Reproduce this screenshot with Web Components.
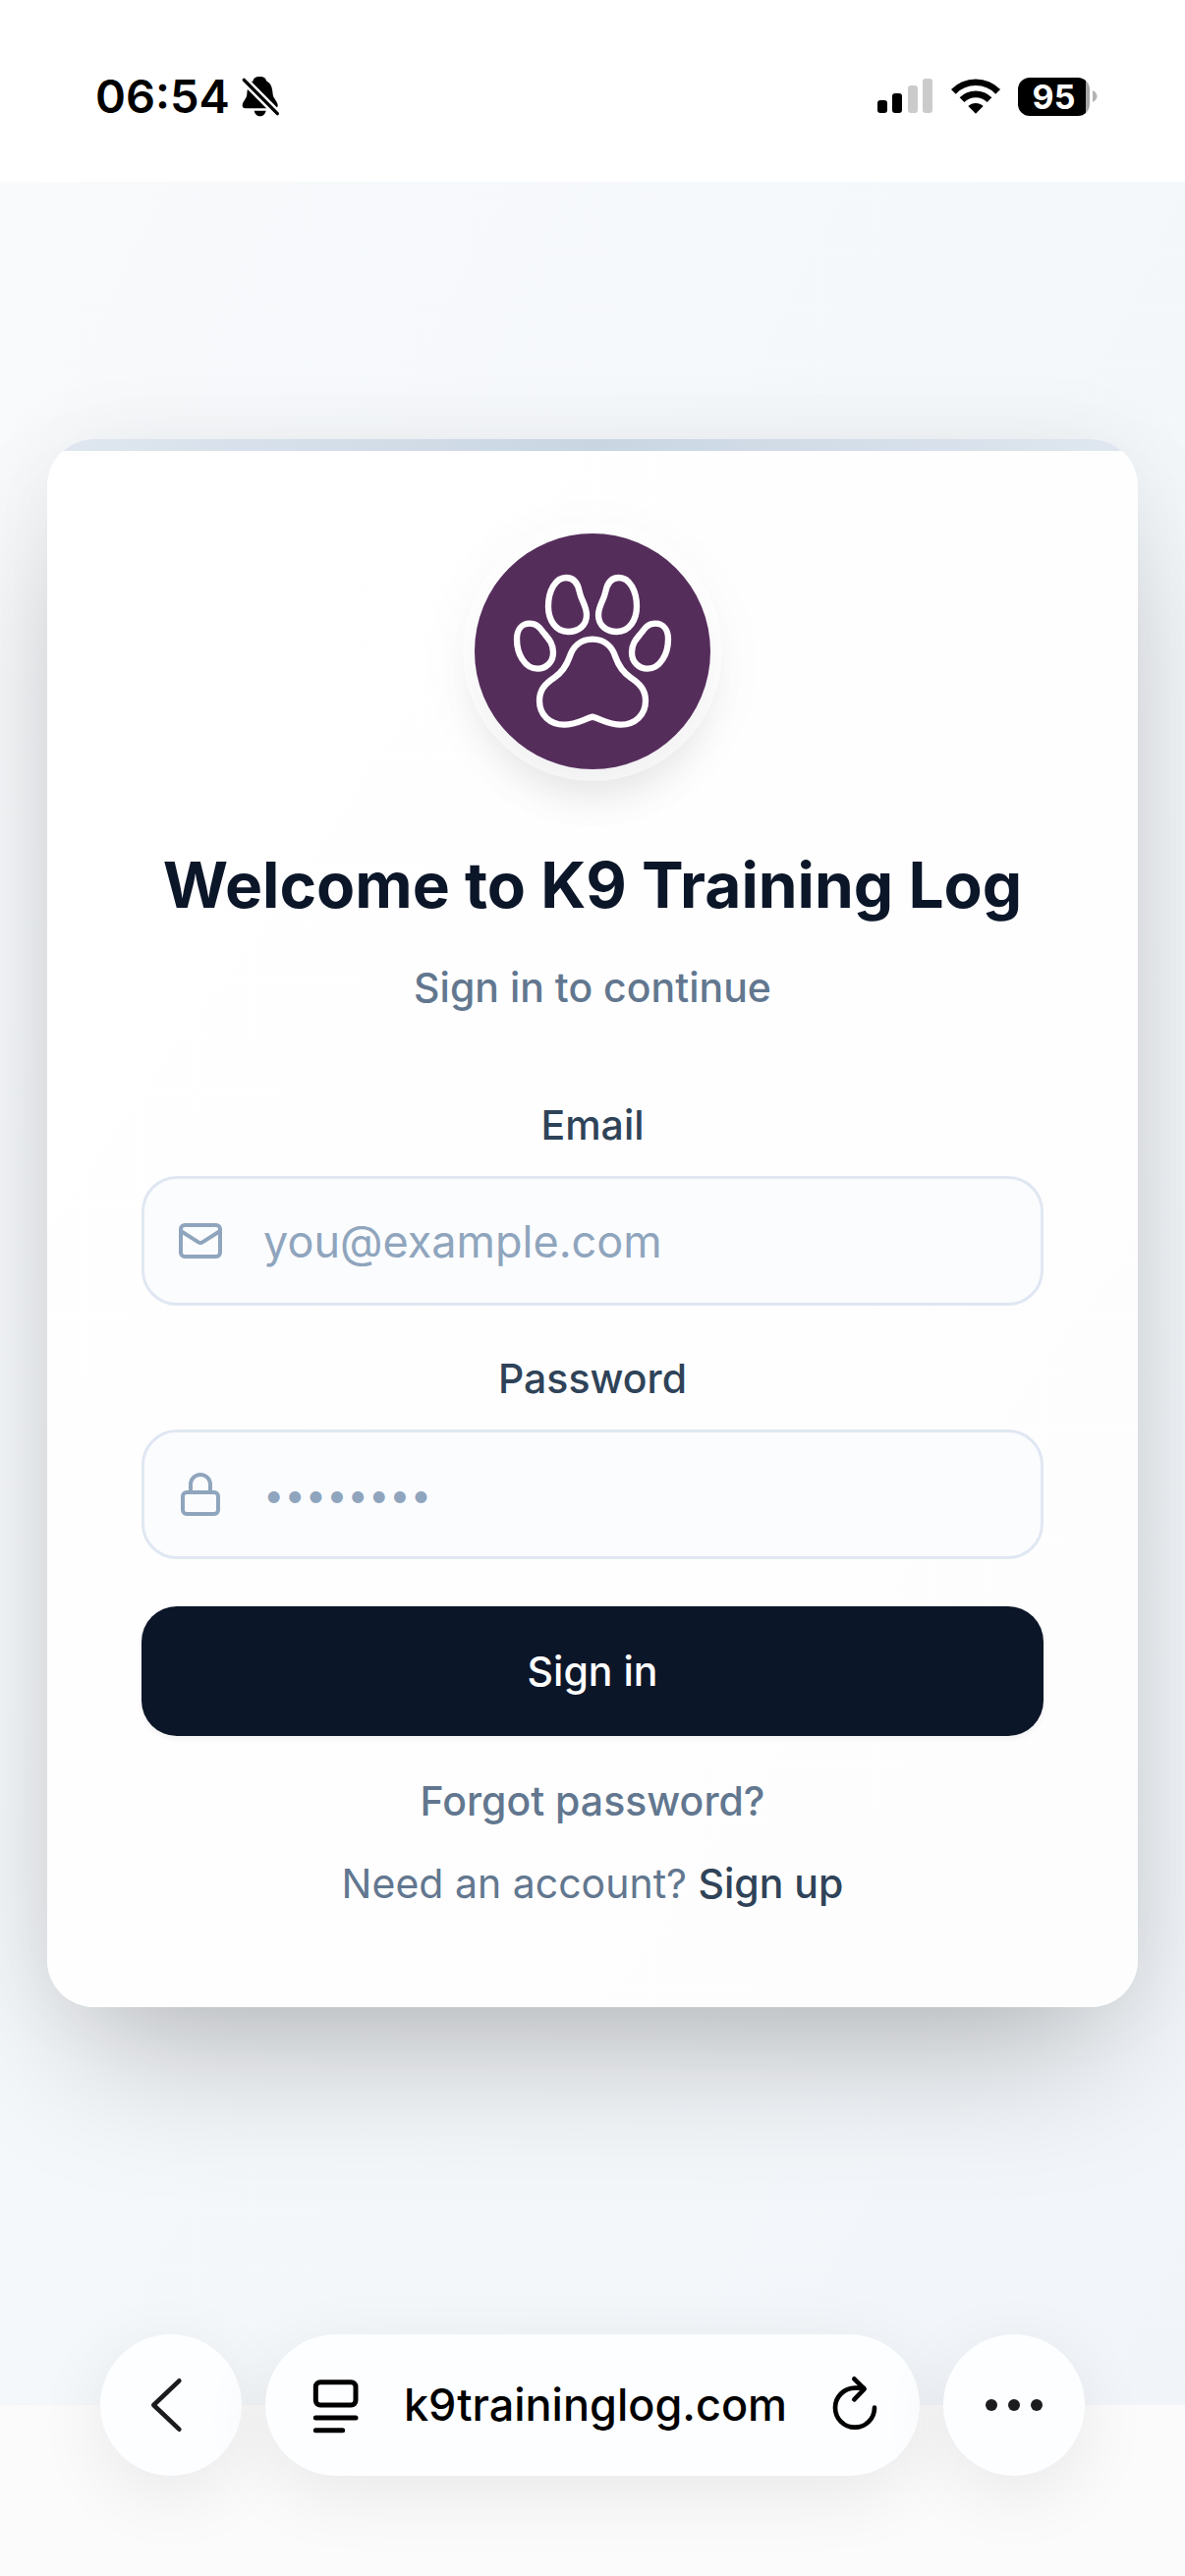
<!DOCTYPE html>
<html lang="en">
<head>
<meta charset="utf-8">
<meta name="viewport" content="width=device-width, initial-scale=1">
<title>K9 Training Log</title>
<style>
  :root {
    --ink: #0c1629;
    --ink-soft: #2f4358;
    --muted: #62778f;
    --placeholder: #8fa5bd;
    --line: #e0e7f2;
  }

  body {
    margin: 0;
    background: #fff;
    font-family: Inter, "Liberation Sans", sans-serif;
    color: var(--ink);
  }
</style>
</head>
<body>
<app-shell>
  <status-bar slot="status" time="06:54" battery="95"></status-bar>
  <login-card heading="Welcome to K9 Training Log" subtitle="Sign in to continue"></login-card>
  <browser-bar slot="toolbar" address="k9traininglog.com"></browser-bar>
</app-shell>

<script>
// app-shell - status bar on top, page in the middle, browser toolbar at the bottom
class AppShell extends HTMLElement {
  constructor() {
    super();
    this.attachShadow({ mode: 'open' });
    this.shadowRoot.innerHTML = `
      <style>
        :host {
          display: flex;
          flex-direction: column;
          min-height: 100vh;
        }

        .page {
          flex: 1;
          display: flex;
          flex-direction: column;
          background: linear-gradient(to bottom right, #f8fafc, #f1f5f9);
        }

        main {
          flex: 1;
          padding: 262px 48px 96px;
        }
      </style>

      <slot name="status"></slot>
      <div class="page">
        <main><slot></slot></main>
        <slot name="toolbar"></slot>
      </div>
    `;
  }
}

// status-bar - clock, silent bell, signal, wifi and battery
class StatusBar extends HTMLElement {
  constructor() {
    super();
    this.attachShadow({ mode: 'open' });
  }

  connectedCallback() {
    this.shadowRoot.innerHTML = `
      <style>
        :host {
          display: flex;
          justify-content: space-between;
          align-items: center;
          padding: 68px 89px 57px 97px;
          background: #fff;
          color: #000;
        }

        .group {
          display: flex;
          align-items: center;
          gap: 18px;
        }

        .clock {
          gap: 12px;
          font-size: 47px;
          font-weight: 600;
          line-height: 60px;
        }

        svg {
          display: block;
        }

        .battery {
          display: flex;
          align-items: center;
          gap: 3px;
        }

        .level {
          width: 73px;
          border-radius: 12px;
          background: linear-gradient(to right, #000 95%, #a6a6a6 95%);
          color: #fff;
          font-size: 34px;
          font-weight: 700;
          line-height: 39px;
          text-align: center;
        }
      </style>

      <div class="group clock">
        <time>${this.getAttribute('time')}</time>
        <svg width="38" height="42" viewBox="562 81 114 126" aria-hidden="true">
          <path d="M617 84C604 84 597 90 597 97C582 105 579 122 578 138C577 152 564 160 564 172C564 178 567 181 573 181H663C669 181 672 178 672 172C672 160 658 150 657 138C656 122 653 105 637 97C637 90 630 84 617 84Z"/>
          <path d="M600 188H636C634 198 627 205 618 205C609 205 602 198 600 188Z"/>
          <path d="M569 94L671 197" stroke="#fff" stroke-width="25"/>
          <path d="M569 94L671 197" stroke="#000" stroke-width="10" stroke-linecap="round"/>
        </svg>
      </div>
      <div class="group">
        <svg width="57" height="36" viewBox="0 0 57 36" aria-hidden="true">
          <rect x="0" y="22" width="10" height="13" rx="3"/>
          <rect x="15" y="15" width="10" height="20" rx="3"/>
          <g fill="#cbcbcb">
            <rect x="31" y="7" width="10" height="28" rx="3"/>
            <rect x="46" y="0" width="10" height="35" rx="3"/>
          </g>
        </svg>
        <svg width="50" height="36" viewBox="322 88 150 108" aria-hidden="true">
          <g fill="none" stroke="#000" stroke-width="20">
            <path d="M329 128A95 95 0 0 1 465 128"/>
            <path d="M355 153A59 59 0 0 1 439 153"/>
          </g>
          <path d="M397 195L374 172A33 33 0 0 1 420 172Z"/>
        </svg>
        <div class="battery">
          <div class="level">${this.getAttribute('battery')}</div>
          <svg width="5" height="12" viewBox="0 0 5 12" aria-hidden="true">
            <path d="M0 0C6 3 6 9 0 12Z" fill="#b3b3b3"/>
          </svg>
        </div>
      </div>
    `;
  }
}

// paw-logo - round purple badge
class PawLogo extends HTMLElement {
  constructor() {
    super();
    this.attachShadow({ mode: 'open' });
    this.shadowRoot.innerHTML = `
      <style>
        :host {
          display: block;
          width: 240px;
          height: 240px;
          border-radius: 50%;
          background: #552d5b;
          box-shadow:
            0 0 0 12px rgba(255, 255, 255, 0.5),
            0 30px 45px -9px rgba(15, 23, 42, 0.1),
            0 12px 72px rgba(15, 23, 42, 0.05);
        }

        svg {
          display: block;
        }
      </style>

      <svg width="240" height="240" viewBox="129 129 720 720" fill="none" stroke="#fff" stroke-width="19" stroke-linejoin="round" role="img" aria-label="K9 Training Log">
        <path d="M489 452C450 452 428 478 419 506C409 534 397 552 374 568C344 588 327 606 327 640C327 684 360 713 402 713C440 713 462 696 489 689C516 696 538 713 576 713C618 713 651 684 651 640C651 606 634 588 604 568C581 552 569 534 559 506C550 478 528 452 489 452Z"/>
        <path d="M408 264C432 264 444 280 449 306C455 335 471 350 471 378C471 410 446 429 414 429C376 429 354 392 354 352C354 304 376 264 408 264Z"/>
        <path d="M570 264C546 264 534 280 529 306C523 335 507 350 507 378C507 410 532 429 564 429C602 429 624 392 624 352C624 304 602 264 570 264Z"/>
        <path d="M297 404C318 404 328 416 338 430C352 448 369 462 369 492C369 522 348 542 321 542C282 542 258 496 258 452C258 424 272 404 297 404Z"/>
        <path d="M681 404C660 404 650 416 640 430C626 448 609 462 609 492C609 522 630 542 657 542C696 542 720 496 720 452C720 424 706 404 681 404Z"/>
      </svg>
    `;
  }
}

// form-field - label, text box and a leading icon passed in through the slot
class FormField extends HTMLElement {
  constructor() {
    super();
    this.attachShadow({ mode: 'open' });
  }

  connectedCallback() {
    this.shadowRoot.innerHTML = `
      <style>
        :host {
          display: flex;
          flex-direction: column;
          gap: 22px;
        }

        label {
          color: var(--ink-soft);
          font-size: 41px;
          font-weight: 500;
          line-height: 60px;
          text-align: center;
        }

        .box {
          display: flex;
          align-items: center;
          gap: 40px;
          height: 126px;
          padding: 0 33px;
          border: 3px solid var(--line);
          border-radius: 36px;
          background: #fbfcfe;
        }

        .box:focus-within {
          border-color: var(--placeholder);
        }

        input {
          flex: 1;
          min-width: 0;
          height: 72px;
          padding: 0;
          border: 0;
          outline: 0;
          background: none;
          color: var(--ink);
          font-family: inherit;
          font-size: 45px;
        }

        input[type="password"] {
          font-size: 38px;
        }

        input::placeholder {
          color: var(--placeholder);
          opacity: 1;
        }

        ::slotted(svg) {
          flex: none;
          color: var(--placeholder);
        }
      </style>

      <label for="control">${this.getAttribute('label')}</label>
      <div class="box">
        <slot></slot>
        <input id="control" type="${this.getAttribute('type')}" placeholder="${this.getAttribute('placeholder')}">
      </div>
    `;
  }
}

// login-card - the sign in form
class LoginCard extends HTMLElement {
  constructor() {
    super();
    this.attachShadow({ mode: 'open' });
  }

  connectedCallback() {
    this.shadowRoot.innerHTML = `
      <style>
        :host {
          display: flex;
          flex-direction: column;
          align-items: center;
          position: relative;
          overflow: hidden;
          padding: 96px;
          border-radius: 48px;
          background: linear-gradient(to bottom right, #fff, #fdfdfe);
          box-shadow:
            0 75px 150px -36px rgba(0, 0, 0, 0.25),
            0 0 90px rgba(15, 23, 42, 0.05);
        }

        .stripe {
          position: absolute;
          top: 0;
          left: 0;
          right: 0;
          height: 12px;
          background: linear-gradient(to right, #e0e7f0, #c9d6e2, #e0e7f0);
        }

        h1 {
          margin: 72px 0 28px;
          font-size: 64px;
          font-weight: 700;
          line-height: 92px;
          text-align: center;
        }

        p {
          margin: 0;
          color: var(--muted);
          font-size: 41px;
          line-height: 60px;
          text-align: center;
        }

        .subtitle {
          font-weight: 500;
        }

        form {
          align-self: stretch;
          display: flex;
          flex-direction: column;
          gap: 44px;
          margin: 80px 0 36px;
        }

        button {
          height: 132px;
          margin-top: 4px;
          border: 0;
          border-radius: 36px;
          background: var(--ink);
          box-shadow: 0 3px 6px rgba(0, 0, 0, 0.05);
          color: #fff;
          font-family: inherit;
          font-size: 41px;
          font-weight: 500;
          cursor: pointer;
        }

        .links {
          display: flex;
          flex-direction: column;
          gap: 24px;
        }

        a {
          color: var(--muted);
          font-weight: 500;
          text-decoration: none;
        }

        .signup {
          color: var(--ink-soft);
        }
      </style>

      <div class="stripe"></div>
      <paw-logo></paw-logo>
      <h1>${this.getAttribute('heading')}</h1>
      <p class="subtitle">${this.getAttribute('subtitle')}</p>
      <form>
        <form-field label="Email" type="email" placeholder="you@example.com">
          <svg width="48" height="48" viewBox="0 0 24 24" fill="none" stroke="currentColor" stroke-width="2" stroke-linecap="round" stroke-linejoin="round" aria-hidden="true">
            <rect x="2" y="4" width="20" height="16" rx="2"/>
            <path d="m22 7-8.97 5.7a1.94 1.94 0 0 1-2.06 0L2 7"/>
          </svg>
        </form-field>
        <form-field label="Password" type="password" placeholder="••••••••">
          <svg width="48" height="48" viewBox="0 0 24 24" fill="none" stroke="currentColor" stroke-width="2" stroke-linecap="round" stroke-linejoin="round" aria-hidden="true">
            <rect x="3" y="11" width="18" height="11" rx="2"/>
            <path d="M7 11V7a5 5 0 0 1 10 0v4"/>
          </svg>
        </form-field>
        <button type="submit">Sign in</button>
      </form>
      <div class="links">
        <p><a href="#forgot">Forgot password?</a></p>
        <p>Need an account? <a class="signup" href="#signup">Sign up</a></p>
      </div>
    `;

    this.shadowRoot.querySelector('form').addEventListener('submit', (e) => {
      e.preventDefault();
      this.dispatchEvent(new CustomEvent('sign-in', { bubbles: true, composed: true }));
    });
  }
}

// browser-bar - floating back, address and menu controls
class BrowserBar extends HTMLElement {
  constructor() {
    super();
    this.attachShadow({ mode: 'open' });
  }

  connectedCallback() {
    this.shadowRoot.innerHTML = `
      <style>
        /* the page ends halfway down the controls */
        :host {
          display: flex;
          gap: 24px;
          padding: 0 102px 102px;
          background: linear-gradient(to bottom, transparent 72px, #fbfbfb 72px);
        }

        .pill {
          display: flex;
          align-items: center;
          justify-content: center;
          box-sizing: border-box;
          height: 144px;
          border: 0;
          border-radius: 72px;
          background: #fdfeff;
          box-shadow: 0 18px 72px rgba(0, 0, 0, 0.08);
          color: #1c1c1e;
        }

        .round {
          flex: none;
          width: 144px;
          padding: 0;
        }

        .address {
          flex: 1;
          justify-content: space-between;
          min-width: 0;
          padding: 0 42px 0 48px;
          color: #000;
          font-size: 45px;
          font-weight: 500;
          line-height: 60px;
        }

        .address button {
          display: flex;
          padding: 0;
          border: 0;
          background: none;
          color: inherit;
        }

        svg {
          display: block;
          fill: none;
          stroke: currentColor;
          stroke-linecap: round;
          stroke-linejoin: round;
        }
      </style>

      <button class="pill round" aria-label="Back">
        <svg width="44" height="62" viewBox="216 230 132 186" stroke-width="14">
          <path d="M307 249L229 323L307 397"/>
        </svg>
      </button>
      <div class="pill address">
        <button aria-label="Page menu">
          <svg width="48" height="58" viewBox="715 237 144 174" stroke-width="15">
            <rect x="725" y="254" width="122" height="70" rx="14"/>
            <path d="M725 363H847M725 401H807"/>
          </svg>
        </button>
        <span>${this.getAttribute('address')}</span>
        <button aria-label="Reload">
          <svg width="48" height="60" viewBox="319 234 144 180" stroke-width="14">
            <path d="M451 332A60 60 0 1 1 391 272H418M389 244L420 275L389 307"/>
          </svg>
        </button>
      </div>
      <button class="pill round" aria-label="More">
        <svg width="58" height="12" viewBox="0 0 58 12">
          <g fill="currentColor" stroke="none">
            <circle cx="6" cy="6" r="6"/>
            <circle cx="29" cy="6" r="6"/>
            <circle cx="52" cy="6" r="6"/>
          </g>
        </svg>
      </button>
    `;
  }
}

customElements.define('app-shell', AppShell);
customElements.define('status-bar', StatusBar);
customElements.define('paw-logo', PawLogo);
customElements.define('form-field', FormField);
customElements.define('login-card', LoginCard);
customElements.define('browser-bar', BrowserBar);
</script>
</body>
</html>
